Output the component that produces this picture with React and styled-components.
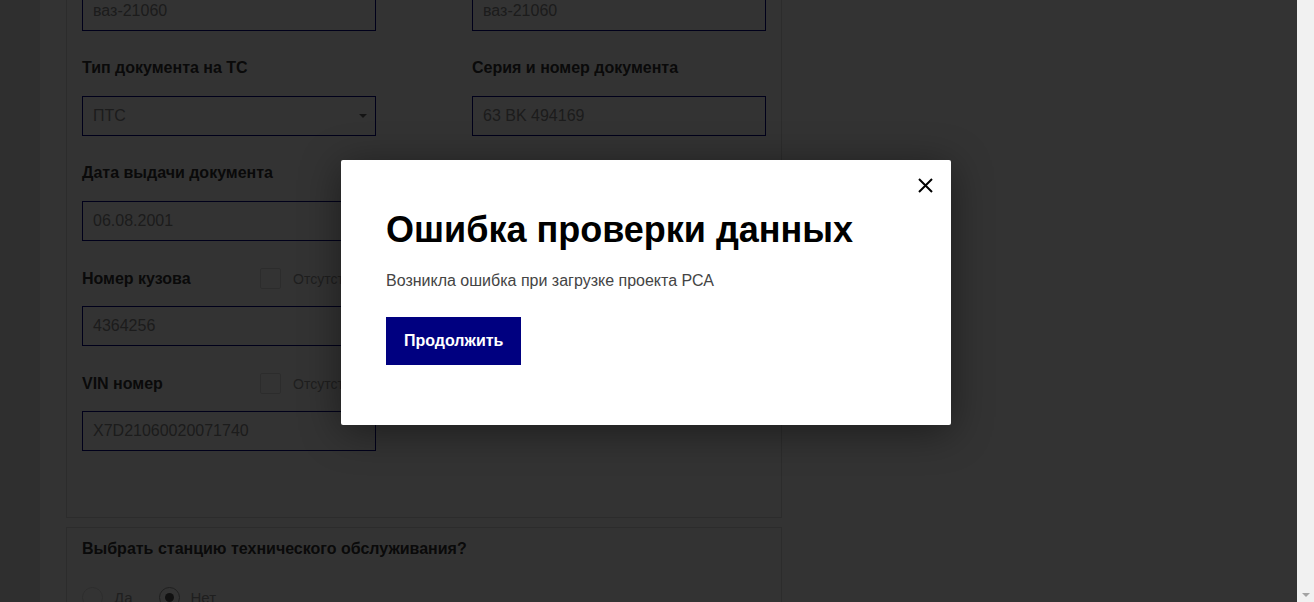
import React from "react";
import styled, { createGlobalStyle } from "styled-components";

const Global = createGlobalStyle`
  html, body { margin: 0; padding: 0; height: 100%; overflow: hidden; }
  body { font-family: "Liberation Sans", Arial, sans-serif; }
  #root { height: 100%; }
  * { box-sizing: border-box; }
`;

const Screen = styled.div`
  display: flex;
  height: 602px;
  width: 100%;
`;

const Viewport = styled.div`
  position: relative;
  flex: 1;
  overflow: hidden;
  background: #e8e8e8;
`;

const Page = styled.main`
  margin-left: 40px;
  margin-top: -72px;
  padding: 24px 0 40px 26px;
  background: #fff;
  min-height: 800px;
  display: flex;
  flex-direction: column;
  gap: 9px;
`;

const Card = styled.section`
  width: 716px;
  border: 1px solid #d9d9d9;
  background: #fff;
  padding: ${(p) => p.$pad};
`;

const Columns = styled.div`
  display: grid;
  grid-template-columns: 294px 294px;
  column-gap: 96px;
  align-items: start;
`;

const Column = styled.div`
  display: flex;
  flex-direction: column;
`;

const Field = styled.div`
  display: flex;
  flex-direction: column;
  gap: 18px;
  margin-bottom: 27px;
`;

const LabelRow = styled.div`
  display: grid;
  grid-template-columns: 178px auto;
  align-items: center;
  height: 20px;
`;

const Label = styled.div`
  font-size: 16px;
  font-weight: 700;
  line-height: 20px;
  color: #333;
  white-space: nowrap;
`;

const CheckWrap = styled.label`
  display: flex;
  align-items: center;
  gap: 12px;
  font-size: 14px;
  color: #999;
  white-space: nowrap;
`;

const CheckBox = styled.span`
  display: block;
  width: 21px;
  height: 21px;
  border: 1px solid #dcdcdc;
  border-radius: 2px;
  background: #fff;
`;

const Input = styled.div`
  position: relative;
  height: 40px;
  border: 1px solid #000080;
  padding: 0 10px;
  display: flex;
  align-items: center;
  font-size: 16px;
  color: #8a8a8a;
  background: #fff;
`;

const Caret = styled.span`
  position: absolute;
  right: 8px;
  top: 50%;
  margin-top: -2px;
  width: 0;
  height: 0;
  border-left: 4px solid transparent;
  border-right: 4px solid transparent;
  border-top: 4px solid #666;
`;

const RadioRow = styled.div`
  display: flex;
  align-items: center;
  margin-top: 28px;
`;

const RadioOption = styled.label`
  display: flex;
  align-items: center;
  gap: 11px;
  margin-right: 26px;
  font-size: 15px;
  color: #999;
`;

const RadioCircle = styled.span`
  position: relative;
  width: 21px;
  height: 21px;
  border-radius: 50%;
  border: 1px solid ${(p) => (p.$checked ? "#999" : "#dcdcdc")};
  background: #fff;
  &::after {
    content: "";
    display: ${(p) => (p.$checked ? "block" : "none")};
    position: absolute;
    left: 5px;
    top: 5px;
    width: 9px;
    height: 9px;
    border-radius: 50%;
    background: #555;
  }
`;

const Overlay = styled.div`
  position: absolute;
  inset: 0;
  background: rgba(0, 0, 0, 0.8);
  display: flex;
  justify-content: center;
  align-items: flex-start;
  padding: 160px 5px 0 0;
`;

const Modal = styled.div`
  position: relative;
  width: 610px;
  height: 265px;
  background: #fff;
  border-radius: 2px;
  box-shadow: 0 6px 40px rgba(0, 0, 0, 0.45);
  padding: 49px 45px 0 45px;
  display: flex;
  flex-direction: column;
  align-items: flex-start;
`;

const Close = styled.button`
  position: absolute;
  top: 17px;
  right: 18px;
  width: 16px;
  height: 16px;
  padding: 0;
  border: 0;
  background: none;
  cursor: pointer;
  display: flex;
  align-items: center;
  justify-content: center;
`;

const Title = styled.h2`
  margin: 0;
  font-size: 36px;
  line-height: 42px;
  font-weight: 700;
  color: #000;
  white-space: nowrap;
`;

const Message = styled.p`
  margin: 20px 0 0;
  font-size: 16px;
  line-height: 20px;
  color: #444;
`;

const Button = styled.button`
  margin-top: 26px;
  height: 48px;
  padding: 0 18px;
  border: 0;
  background: #000080;
  color: #fff;
  font-family: inherit;
  font-size: 16px;
  font-weight: 700;
  cursor: pointer;
`;

const ScrollTrack = styled.div`
  width: 17px;
  flex: 0 0 17px;
  background: #f1f1f1;
  display: flex;
  flex-direction: column;
  justify-content: flex-end;
  align-items: center;
`;

const ScrollArrow = styled.span`
  width: 0;
  height: 0;
  margin-bottom: 5px;
  border-left: 4px solid transparent;
  border-right: 4px solid transparent;
  border-top: 4px solid #a3a3a3;
`;

function TextField({ label, value, select, check }) {
  return (
    <Field>
      <LabelRow>
        <Label>{label}</Label>
        {check && (
          <CheckWrap>
            <CheckBox />
            Отсутствует
          </CheckWrap>
        )}
      </LabelRow>
      <Input>
        {value}
        {select && <Caret />}
      </Input>
    </Field>
  );
}

export default function App() {
  return (
    <>
      <Global />
      <Screen>
        <Viewport>
          <Page>
            <Card $pad="0 15px 39px 15px">
              <Columns>
                <Column>
                  <TextField label="Модель ТС" value="ваз-21060" />
                  <TextField label="Тип документа на ТС" value="ПТС" select />
                  <TextField label="Дата выдачи документа" value="06.08.2001" />
                  <TextField label="Номер кузова" value="4364256" check />
                  <TextField label="VIN номер" value="X7D21060020071740" check />
                </Column>
                <Column>
                  <TextField label="Модель ТС" value="ваз-21060" />
                  <TextField label="Серия и номер документа" value="63 BK 494169" />
                </Column>
              </Columns>
            </Card>
            <Card $pad="11px 15px 20px 15px">
              <Label>Выбрать станцию технического обслуживания?</Label>
              <RadioRow>
                <RadioOption>
                  <RadioCircle />
                  Да
                </RadioOption>
                <RadioOption>
                  <RadioCircle $checked />
                  Нет
                </RadioOption>
              </RadioRow>
            </Card>
          </Page>
          <Overlay>
            <Modal role="dialog">
              <Close aria-label="Закрыть">
                <svg width="15" height="15" viewBox="0 0 15 15">
                  <path d="M1 1 L14 14 M14 1 L1 14" stroke="#000" strokeWidth="2" />
                </svg>
              </Close>
              <Title>Ошибка проверки данных</Title>
              <Message>Возникла ошибка при загрузке проекта РСА</Message>
              <Button>Продолжить</Button>
            </Modal>
          </Overlay>
        </Viewport>
        <ScrollTrack>
          <ScrollArrow />
        </ScrollTrack>
      </Screen>
    </>
  );
}
